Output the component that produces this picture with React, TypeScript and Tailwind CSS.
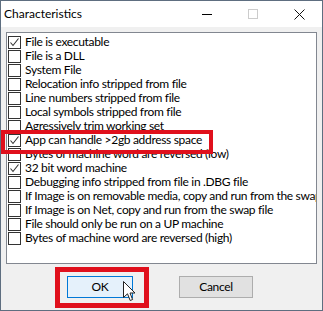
import React from "react";

const items: [string, boolean][] = [
  ["File is executable", true],
  ["File is a DLL", false],
  ["System File", false],
  ["Relocation info stripped from file", false],
  ["Line numbers stripped from file", false],
  ["Local symbols stripped from file", false],
  ["Agressively trim working set", false],
  ["App can handle >2gb address space", true],
  ["Bytes of machine word are reversed (low)", false],
  ["32 bit word machine", true],
  ["Debugging info stripped from file in .DBG file", false],
  ["If Image is on removable media, copy and run from the swap file", false],
  ["If Image is on Net, copy and run from the swap file", false],
  ["File should only be run on a UP machine", false],
  ["Bytes of machine word are reversed (high)", false],
];

function Check({ checked }: { checked: boolean }) {
  return (
    <div className="w-[13px] h-[13px] border border-[#333333] bg-white shrink-0 flex items-center justify-center">
      {checked && (
        <svg width="11" height="11" viewBox="0 0 11 11">
          <path d="M1.5 5.5 L4 8.5 L9.5 1.5" fill="none" stroke="#333" strokeWidth="1.1" />
        </svg>
      )}
    </div>
  );
}

export default function App() {
  return (
    <div
      className="relative w-[323px] h-[311px] border border-[#5e6e80] bg-[#f0f0f0] flex flex-col overflow-hidden text-[12px] tracking-[-0.32px] text-black"
      style={{ fontFamily: 'Lato, "Noto Sans", sans-serif' }}
    >
      {/* title bar */}
      <div className="h-[26px] bg-white flex items-center shrink-0 relative">
        <span className="ml-[3px] text-[12px] leading-none tracking-normal">Characteristics</span>
        <div className="ml-auto flex items-center h-full">
          <div className="w-[46px] h-full flex items-center justify-center">
            <div className="w-[10px] h-px bg-black" />
          </div>
          <div className="w-[46px] h-full flex items-center justify-center">
            <div className="w-[10px] h-[10px] border border-[#cccccc]" />
          </div>
          <div className="w-[46px] h-full flex items-center justify-center">
            <svg width="11" height="11" viewBox="0 0 11 11">
              <path d="M0.5 0.5 L10.5 10.5 M10.5 0.5 L0.5 10.5" stroke="#111" strokeWidth="1" />
            </svg>
          </div>
        </div>
      </div>

      {/* list */}
      <div className="ml-[5px] mt-[5px] w-[311px] h-[232px] border border-[#828790] bg-white pt-[2px] pl-px overflow-hidden">
        {items.map(([label, checked], i) => (
          <div key={i} className="h-[14px] flex items-center gap-[4px] whitespace-nowrap">
            <Check checked={checked} />
            <span className="leading-none">{label}</span>
          </div>
        ))}
      </div>

      {/* buttons */}
      <div className="flex mt-[12px]">
        <div className="ml-[66px] w-[66px] h-[22px] border border-[#0078d7] bg-[#e5f1fb] flex items-center justify-center">
          OK
        </div>
        <div className="ml-[46px] w-[74px] h-[22px] border border-[#adadad] bg-[#e1e1e1] flex items-center justify-center">
          Cancel
        </div>
      </div>

      {/* red highlights */}
      <div className="absolute left-0 top-[129px] w-[212px] h-[24px] border-[4px] border-[#e0101c]" />
      <div className="absolute left-[54px] top-[266px] w-[94px] h-[41px] border-[5px] border-[#e0101c]" />

      {/* cursor */}
      <svg className="absolute left-[122px] top-[280px]" width="13" height="21" viewBox="0 0 13 21">
        <path
          d="M0.5 0.5 L0.5 16.5 L4.5 12.8 L7.2 19.5 L9.6 18.5 L7 12 L12 12 Z"
          fill="white"
          stroke="#222"
          strokeWidth="1"
          strokeLinejoin="round"
        />
      </svg>
    </div>
  );
}
